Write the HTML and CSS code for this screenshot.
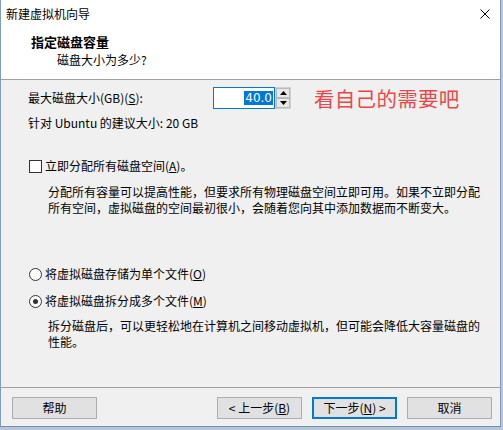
FILE: index.html
```html
<!DOCTYPE html>
<html lang="zh-CN">
<head>
<meta charset="utf-8">
<title>新建虚拟机向导</title>
<link rel="stylesheet" href="styles.css">
</head>
<body>
<div class="window">
  <div class="titlebar">
    <span class="title">新建虚拟机向导</span>
    <svg class="close" width="10" height="10" viewBox="0 0 10 10"><path d="M0.5 0.5 L9.5 9.5 M9.5 0.5 L0.5 9.5" stroke="#000" stroke-width="1" fill="none"/></svg>
  </div>
  <div class="header">
    <div class="h-title">指定磁盘容量</div>
    <div class="h-sub">磁盘大小为多少?</div>
  </div>
  <div class="content">
    <div class="size-row">
      <span class="size-label">最大磁盘大小(GB)(<u>S</u>):</span>
      <div class="spin">
        <div class="spin-input"><span class="sel">40.0</span></div>
        <div class="spin-btns">
          <span class="sb"><svg width="7" height="4" viewBox="0 0 7 4"><path d="M3.5 0 L7 4 L0 4 Z" fill="#000"/></svg></span>
          <span class="sb"><svg width="7" height="4" viewBox="0 0 7 4"><path d="M0 0 L7 0 L3.5 4 Z" fill="#000"/></svg></span>
        </div>
      </div>
      <span class="note">看自己的需要吧</span>
    </div>
    <div class="line hint">针对 Ubuntu 的建议大小: 20 GB</div>
    <div class="line opt check-row"><span class="checkbox"></span><span>立即分配所有磁盘空间(<u>A</u>)。</span></div>
    <p class="desc d1">分配所有容量可以提高性能，但要求所有物理磁盘空间立即可用。如果不立即分配<br>所有空间，虚拟磁盘的空间最初很小，会随着您向其中添加数据而不断变大。</p>
    <div class="line opt radio-row r1"><span class="radio"></span><span>将虚拟磁盘存储为单个文件(<u>O</u>)</span></div>
    <div class="line opt radio-row r2"><span class="radio checked"></span><span>将虚拟磁盘拆分成多个文件(<u>M</u>)</span></div>
    <p class="desc d2">拆分磁盘后，可以更轻松地在计算机之间移动虚拟机，但可能会降低大容量磁盘的<br>性能。</p>
  </div>
  <div class="footer">
    <button class="btn">帮助</button>
    <div class="spacer"></div>
    <button class="btn">&lt; 上一步(<u>B</u>)</button>
    <button class="btn default">下一步(<u>N</u>) &gt;</button>
    <button class="btn">取消</button>
  </div>
</div>
</body>
</html>
```
FILE: styles.css
```css
html, body {
  margin: 0;
  padding: 0;
}
body {
  background: #b9c6d5;
  width: 503px;
  height: 430px;
  overflow: hidden;
  font-family: "Noto Sans CJK SC", "Microsoft YaHei", sans-serif;
  font-size: 12px;
  color: #000;
}
.window {
  box-sizing: border-box;
  width: 501px;
  height: 427px;
  border-left: 1px solid #7f9cbc;
  border-right: 1px solid #7f9cbc;
  border-bottom: 1px solid #6f8fb5;
  background: #f0f0f0;
  display: flex;
  flex-direction: column;
}
.titlebar {
  height: 27px;
  background: #fff;
  display: flex;
  align-items: center;
  padding-left: 5px;
  padding-right: 10px;
}
.title {
  line-height: 16px;
  flex: 1;
}
.close {
  display: block;
}
.header {
  background: #fff;
  height: 53px;
  box-sizing: border-box;
  padding: 7px 0 0 30px;
  border-bottom: 1px solid #a0a0a0;
}
.h-title {
  font-weight: bold;
  font-size: 13px;
  line-height: 16px;
}
.h-sub {
  line-height: 16px;
  margin-top: 2px;
  margin-left: 26px;
}
.content {
  flex: 1;
  padding-left: 27px;
}
.size-row {
  margin-top: 7px;
  height: 22px;
  display: flex;
  align-items: center;
}
.size-label {
  width: 185px;
  line-height: 16px;
}
.spin {
  display: flex;
  height: 22px;
}
.spin-input {
  box-sizing: border-box;
  width: 62px;
  height: 22px;
  border: 1px solid #0078d7;
  background: #fff;
  display: flex;
  align-items: center;
  justify-content: flex-end;
  padding-right: 1px;
}
.sel {
  background: #0078d7;
  color: #fff;
  font-family: "DejaVu Sans", sans-serif;
  font-size: 12px;
  line-height: 14px;
  padding: 0 1px;
}
.spin-btns {
  box-sizing: border-box;
  width: 16px;
  height: 22px;
  display: flex;
  flex-direction: column;
  border: 1px solid #d0d0d0;
  background: #f0f0f0;
}
.sb {
  flex: 1;
  display: flex;
  align-items: center;
  justify-content: center;
  border: 1px solid #b8b8b8;
  background: #e8e8e8;
}
.sb svg {
  display: block;
}
.note {
  margin-left: 23px;
  font-size: 20.5px;
  line-height: 22px;
  color: #e8484a;
  letter-spacing: 0.3px;
}
.line {
  line-height: 16px;
  height: 16px;
}
.hint {
  margin-top: 6px;
}
.opt {
  display: flex;
  align-items: center;
}
.check-row {
  margin-top: 27px;
}
.checkbox {
  box-sizing: border-box;
  width: 13px;
  height: 13px;
  border: 1px solid #333;
  background: #fff;
  margin-right: 3px;
  margin-left: 1px;
}
.radio {
  box-sizing: border-box;
  width: 13px;
  height: 13px;
  border: 1px solid #333;
  border-radius: 50%;
  background: #fff;
  margin-right: 3px;
  margin-left: 1px;
  display: flex;
  align-items: center;
  justify-content: center;
}
.radio.checked::after {
  content: "";
  width: 5px;
  height: 5px;
  border-radius: 50%;
  background: #333;
}
.desc {
  margin: 0;
  padding-left: 20px;
  line-height: 16px;
  white-space: nowrap;
}
.d1 {
  margin-top: 10px;
}
.r1 {
  margin-top: 50px;
}
.r2 {
  margin-top: 11px;
}
.d2 {
  margin-top: 9px;
}
.footer {
  border-top: 1px solid #a0a0a0;
  padding: 9px 8px 7px 11px;
  display: flex;
  gap: 10px;
}
.spacer {
  flex: 1;
}
.btn {
  box-sizing: border-box;
  width: 85px;
  height: 22px;
  border: 1px solid #adadad;
  background: #e1e1e1;
  font-family: "Noto Sans CJK SC", "Microsoft YaHei", sans-serif;
  font-size: 12px;
  line-height: 16px;
  color: #000;
  padding: 0;
  margin: 0;
}
.btn.default {
  border: 1px solid #0078d7;
  box-shadow: inset 0 0 0 1px #0078d7;
}
```
